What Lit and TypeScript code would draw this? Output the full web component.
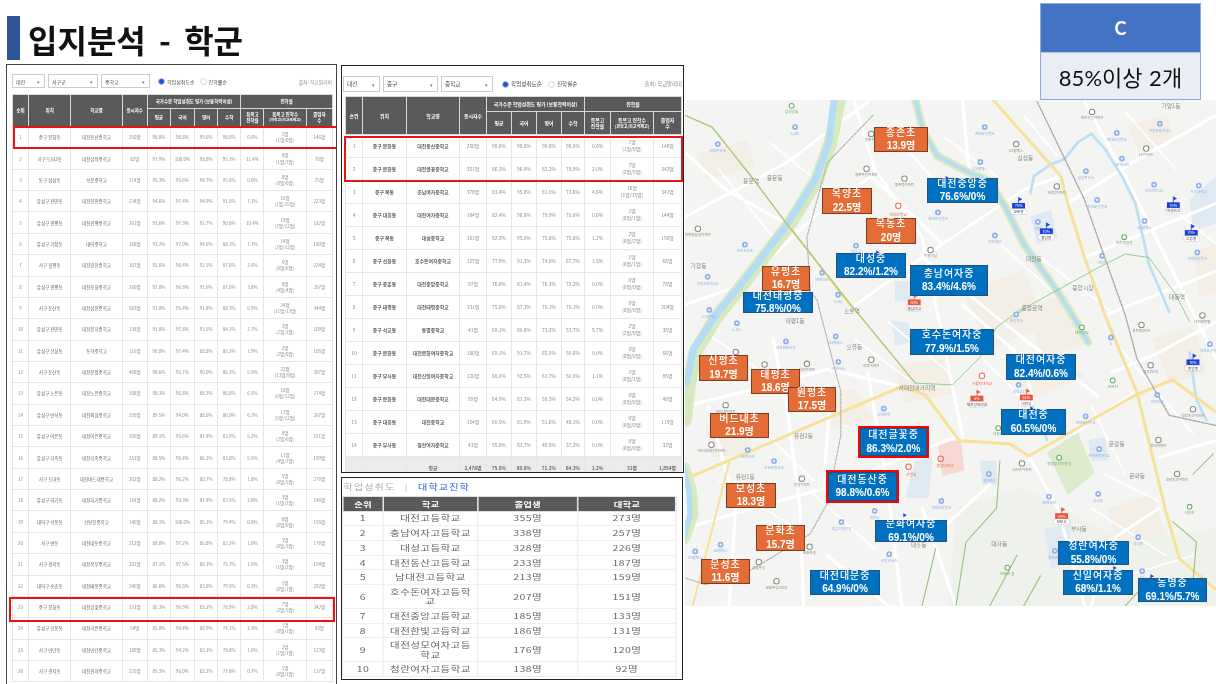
import { LitElement, html, css, svg } from "lit";
import { customElement } from "lit/decorators.js";

type Row = string[];
const leftRows: Row[] = `1|중구 문화동|대전동산중학교|250명|98.8%|98.8%|99.6%|98.0%|0.6%|1명|(1명/0명)|146명
2|서구 도마2동|대전삼육중학교|82명|97.9%|100.0%|98.8%|95.1%|11.4%|8명|(1명/7명)|70명
3|동구 삼성동|보문중학교|114명|95.3%|95.6%|94.7%|95.6%|0.0%|0명|(0명/0명)|75명
4|유성구 전민동|대전전민중학교|234명|94.6%|97.4%|94.9%|91.5%|7.1%|16명|(1명/15명)|223명
5|유성구 관평동|대전관평중학교|261명|93.6%|97.3%|92.7%|90.8%|10.4%|19명|(7명/12명)|182명
6|유성구 가정동|대덕중학교|168명|93.2%|97.0%|94.6%|88.1%|7.7%|14명|(2명/12명)|180명
7|서구 월평동|대전갈전중학교|307명|92.6%|98.4%|92.5%|87.0%|2.6%|6명|(0명/6명)|224명
8|유성구 관평동|대전동화중학교|260명|92.0%|96.8%|91.6%|87.6%|3.8%|8명|(4명/4명)|207명
9|서구 둔산동|대전삼천중학교|503명|91.8%|95.4%|91.8%|88.3%|6.9%|24명|(11명/13명)|344명
10|유성구 전민동|대전문지중학교|138명|91.8%|97.8%|93.5%|84.1%|2.7%|3명|(2명/1명)|109명
11|유성구 신성동|동혁중학교|116명|90.8%|97.4%|88.8%|86.2%|1.9%|2명|(2명/0명)|105명
12|서구 둔산동|대전문정중학교|468명|90.6%|95.7%|90.0%|86.1%|5.5%|22명|(13명/9명)|397명
13|유성구 노은동|대전노은중학교|308명|90.3%|96.8%|88.3%|86.0%|6.5%|18명|(6명/12명)|274명
14|유성구 반석동|대전외삼중학교|299명|89.5%|94.0%|88.6%|86.0%|6.3%|17명|(5명/12명)|267명
15|유성구 어은동|대전어은중학교|205명|89.1%|95.6%|87.8%|83.9%|5.2%|8명|(2명/6명)|151명
16|유성구 지족동|대전지족중학교|253명|88.5%|96.4%|86.2%|83.0%|5.5%|11명|(4명/7명)|199명
17|서구 도마동|대전버드내중학교|202명|88.2%|96.2%|80.7%|78.8%|1.8%|5명|(0명/5명)|276명
18|유성구 하기동|대전하기중학교|164명|88.2%|93.3%|87.8%|83.5%|2.0%|3명|(1명/2명)|146명
19|대덕구 석봉동|신탄진중학교|140명|88.1%|100.0%|85.1%|79.4%|0.0%|0명|(0명/0명)|155명
20|서구 변동|대전내동중학교|212명|88.0%|97.2%|86.8%|82.2%|1.6%|3명|(0명/3명)|176명
21|서구 관저동|대전봉우중학교|202명|87.1%|97.5%|88.1%|75.7%|1.5%|3명|(1명/2명)|194명
22|대덕구 송촌동|대전매봉중학교|346명|86.6%|96.5%|83.8%|79.5%|0.3%|1명|(0명/1명)|292명
23|중구 문화동|대전글꽃중학교|351명|86.3%|96.9%|83.2%|78.9%|2.0%|7명|(2명/5명)|342명
24|유성구 신봉동|대전가온중학교|54명|85.8%|94.4%|88.9%|74.1%|2.3%|1명|(0명/1명)|43명
25|서구 만년동|대전만년중학교|189명|85.3%|94.2%|83.1%|78.8%|1.6%|2명|(1명/1명)|123명
26|서구 관저동|대전관저중학교|225명|85.3%|96.0%|82.2%|77.8%|0.7%|1명|(0명/1명)|137명`
  .split("\n").map((l) => l.split("|"));

const midRows: Row[] = `1|중구 문화동|대전동산중학교|250명|98.8%|98.8%|99.6%|98.0%|0.6%|1명|(1명/0명)|146명
2|중구 문화동|대전글꽃중학교|351명|86.3%|96.9%|83.2%|78.9%|2.0%|7명|(2명/5명)|342명
3|중구 목동|충남여자중학교|378명|83.4%|95.8%|81.0%|73.6%|4.6%|16명|(1명/15명)|341명
4|중구 대흥동|대전여자중학교|164명|82.4%|96.8%|79.9%|70.6%|0.6%|1명|(0명/1명)|144명
5|중구 목동|대성중학교|161명|82.2%|95.0%|75.8%|75.8%|1.2%|2명|(0명/2명)|156명
6|중구 선화동|호수돈여자중학교|127명|77.9%|91.3%|74.8%|67.7%|1.5%|1명|(0명/1명)|66명
7|중구 중촌동|대전중앙중학교|97명|76.6%|81.4%|76.3%|72.2%|0.0%|0명|(0명/0명)|78명
8|중구 태평동|대전태평중학교|331명|75.8%|87.3%|70.1%|70.1%|0.0%|0명|(0명/0명)|204명
9|중구 석교동|동명중학교|41명|69.1%|80.8%|73.2%|53.7%|5.7%|2명|(2명/0명)|35명
10|중구 문화동|대전문화여자중학교|180명|69.1%|91.7%|65.0%|50.6%|0.0%|0명|(0명/0명)|66명
11|중구 부사동|대전신일여자중학교|120명|68.0%|92.5%|61.7%|50.0%|1.1%|1명|(0명/1명)|85명
12|중구 문화동|대전대문중학교|59명|64.9%|81.3%|59.3%|54.2%|0.0%|0명|(0명/0명)|40명
13|중구 대흥동|대전중학교|154명|60.5%|81.9%|51.6%|48.1%|0.0%|0명|(0명/0명)|119명
14|중구 부사동|청란여자중학교|43명|55.8%|83.7%|46.5%|37.2%|0.0%|0명|(0명/0명)|32명`
  .split("\n").map((l) => l.split("|"));

const uniRows: Row[] = [
  ["1", "대전고등학교", "355명", "273명"],
  ["2", "충남여자고등학교", "338명", "257명"],
  ["3", "대성고등학교", "328명", "226명"],
  ["4", "대전동산고등학교", "233명", "187명"],
  ["5", "남대전고등학교", "213명", "159명"],
  ["6", "호수돈여자고등학교", "207명", "151명"],
  ["7", "대전중앙고등학교", "185명", "133명"],
  ["8", "대전한빛고등학교", "186명", "131명"],
  ["9", "대전성모여자고등학교", "176명", "120명"],
  ["10", "청란여자고등학교", "138명", "92명"],
];

const leftCols = [16, 42, 51, 25, 23, 24, 23, 23, 23, 42, 26];
const midCols = [17, 44, 53, 27, 25, 25, 25, 23, 26, 43, 28];

type Label = [string, string, number, number, number, number, "b" | "o" | "r"];
const labels: Label[] = [
  ["종존초", "13.9명", 189, 27, 54, 25, "o"],
  ["대전중앙중", "76.6%/0%", 242, 78, 71, 25, "b"],
  ["목양초", "22.5명", 137, 88, 50, 26, "o"],
  ["목동초", "20명", 181, 118, 50, 26, "o"],
  ["대성중", "82.2%/1.2%", 151, 153, 70, 25, "b"],
  ["충남여자중", "83.4%/4.6%", 225, 165, 78, 31, "b"],
  ["유평초", "16.7명", 77, 166, 48, 25, "o"],
  ["대전태평중", "75.8%/0%", 58, 192, 70, 21, "b"],
  ["호수돈여자중", "77.9%/1.5%", 225, 229, 84, 26, "b"],
  ["대전여자중", "82.4%/0.6%", 321, 254, 70, 26, "b"],
  ["신평초", "19.7명", 14, 255, 49, 26, "o"],
  ["태평초", "18.6명", 66, 269, 49, 25, "o"],
  ["원평초", "17.5명", 103, 287, 48, 25, "o"],
  ["버드내초", "21.9명", 25, 313, 59, 25, "o"],
  ["대전중", "60.5%/0%", 316, 309, 65, 26, "b"],
  ["대전글꽃중", "86.3%/2.0%", 173, 326, 71, 32, "r"],
  ["대전동산중", "98.8%/0.6%", 141, 370, 73, 33, "r"],
  ["보성초", "18.3명", 41, 383, 50, 25, "o"],
  ["문화여자중", "69.1%/0%", 190, 420, 72, 22, "b"],
  ["문화초", "15.7명", 71, 425, 49, 26, "o"],
  ["문성초", "11.6명", 16, 459, 49, 25, "o"],
  ["대전대문중", "64.9%/0%", 125, 470, 70, 25, "b"],
  ["청란여자중", "55.8%/0%", 373, 441, 71, 24, "b"],
  ["신일여자중", "68%/1.1%", 378, 470, 70, 25, "b"],
  ["동명중", "69.1%/5.7%", 453, 478, 69, 24, "b"],
];

const B = 886; // offset between the two halves of the map sketch
const blue: [number, number, string][] = [
  [325, 375, "S-OIL"], [97, 425, "현대주유소"], [885, 375, "현대오일뱅크"], [872, 478, "GS칼텍스"],
  [1275, 392, "현대오일뱅크"], [1402, 365, "가양초등학교2"], [1290, 468, "SK에너지"], [1184, 505, "삼성주유소"],
  [1385, 545, "대전여자고2"], [1517, 548, "우송대학교"], [1217, 590, "현대오일뱅크"], [1042, 655, "한밭"],
  [1357, 652, "GS칼텍스"], [747, 627, "현대오일뱅크"], [915, 695, "대전여상"], [177, 722, "대전서부초"],
  [505, 725, "대성고"], [405, 805, "SK엔크린"], [67, 817, "가장초등학교2"], [452, 870, "S-OIL"],
  [72, 915, "GS칼텍스"], [153, 68 + B, "S-OIL"], [445, 107 + B, "GS칼텍스"], [298, 122 + B, "대전천변시장"],
  [453, 182 + B, "SK주유소"], [587, 320 + B, "서대전역"], [185, 442 + B, "SK엔크린"], [263, 475 + B, "보문초등학교"],
  [897, 513 + B, "대전여상"], [757, 593 + B, "현대오일뱅크"], [560, 622 + B, "대전고"], [462, 655 + B, "충남기계공고"],
  [105, 722 + B, "GS칼텍스"], [30, 742 + B, "GS칼텍스"], [603, 750 + B, "한밭도서관"], [1075, 580 + B, "SK엔크린"],
  [1220, 572 + B, "부사동"], [1338, 700 + B, "석교동"], [1092, 740 + B, "청란여고"], [1350, 800 + B, "GS"],
  [1183, 343 + B, "현대오일뱅크"], [1223, 440 + B, "문창초등학교2"], [1395, 280 + B, "대전대성"], [1258, 110 + B, "S"],
  [978, 42 + B, "제일약국"], [985, 250 + B, "대전고2"], [1550, 130 + B, "대전초등학교"], [1513, 745, "현대오일뱅크"],
  [1232, 755, "대전역"],
];
const grey: [number, number, string][] = [
  [550, 395, "종촌주공"], [536, 498, "중촌주공아파트"], [648, 527, "중촌동아파트"], [978, 425, "GS칼텍스"],
  [1098, 550, "한밭2아파트"], [1202, 330, "대전구성아파트"], [1362, 438, "LH아파트"], [725, 738, "목동더샵"],
  [38, 675, "대흥동삼성아파트"], [150, 153 + B, "신평아파트"], [235, 190 + B, "태평아파트"], [360, 188 + B, "삼부아파트"],
  [120, 310 + B, "버드내아파트"], [78, 427 + B, "버드내2단지아파트"], [345, 527 + B, "동양아파트"], [550, 176 + B, "오류아파트"],
  [368, 728 + B, "문화주공"], [218, 773 + B, "선암주공"], [270, 830 + B, "문화주공2단지"], [1348, 73 + B, "센트럴2단지"],
  [1528, 45 + B, "대전센트럴"], [1375, 192 + B, "삼부2단지"], [1500, 322 + B, "대전한신아파트"], [1398, 413 + B, "현대아파트"],
  [1453, 513 + B, "대전동부아파트"], [995, 482 + B, "대사동아파트"],
];
const places: [number, number, string][] = [
  [265, 530, "용문동"], [40, 792, "가장동"], [325, 68 + B, "태평1동"], [500, 145 + B, "오류동"], [350, 408 + B, "유천2동"],
  [178, 527 + B, "유천1동"], [1275, 430 + B, "문창동"], [1335, 525 + B, "문화동"], [1163, 682 + B, "부사동"], [928, 725 + B, "대사동"],
  [690, 730 + B, "대흥동"], [1435, 320, "가양1동"], [1005, 473, "삼성동"], [1175, 855, "중앙시장"], [1030, 770, "대전동"],
  [195, 540, "용문역"], [493, 925, "오룡역"], [685, 265 + B, "서대전네거리역"], [1453, 882, "대동역"], [1025, 915, "중앙로역"],
];
const greenPoi: [number, number, string][] = [
  [315, 312, "남선공원"], [1297, 700, "대전역광장"], [1172, 80 + B, "테미공원"], [1263, 237 + B, "보문산"], [925, 378 + B, "대종로"],
  [1105, 465 + B, "한밭종합운동장"], [1490, 610 + B, "식장산"], [952, 790 + B, "보문산 숲"],
];
const flags: [number, number, string, string, string][] = [
  [985, 600, "#1b3fd4", "70%", "보문중"], [1067, 675, "#1b3fd4", "70%", "충남중"], [1442, 598, "#1b3fd4", "70%", "대성여고"],
  [1495, 680, "#1b3fd4", "70%", "우송중"], [1500, 176 + B, "#1b3fd4", "70%", "중앙중"], [677, 885, "#e8553d", "80%", "충남여고"],
  [1008, 280 + B, "#e8553d", "51%", "대전고"], [862, 283 + B, "#e8553d", "6%", "대전성모여고"], [1112, 630 + B, "#e8553d", "34%", "보문고"],
];

const whiteRoads = [
  "M0 640 300 480 540 300", "M170 840 380 640 550 520 760 720", "M490 910 700 760 1000 560 1110 520",
  "M700 760 1000 1000 1220 1170", "M500 300 560 500 700 700 820 1290", "M1130 600 1320 480 1568 340",
  "M1180 760 1568 600", "M1240 930 1568 800", "M0 450 120 560 300 660", "M0 900 170 840", "M0 1200 200 1150 420 1090 640 1141",
  "M260 1000 300 1200 340 1500 350 1789", "M540 1100 600 1450 640 1789", "M0 1560 200 1500 420 1440 800 1290",
  "M1015 1346 1100 1500 1180 1789", "M1330 1156 1150 1280", "M1400 1350 1568 1300", "M1400 1500 1250 1600 1200 1789",
  "M820 300 840 520", "M1180 300 1300 520 1420 760 1568 1060", "M820 900 1000 1060 1040 1240", "M1568 950 1400 1040 1260 1100",
  "M70 1200 150 1500 130 1789", "M430 1150 410 1430", "M760 1560 900 1430", "M700 1500 800 1789", "M420 1640 600 1789",
];
const thinRoads = [
  "M100 500 260 700", "M250 420 420 560", "M620 400 760 560", "M760 400 920 520", "M1300 330 1450 500", "M1000 340 1100 460",
  "M1420 600 1568 720", "M930 720 1130 900", "M1050 760 1260 920", "M1260 1000 1500 1280", "M1200 1200 1300 1400", "M860 1040 1000 1180",
  "M600 950 780 1100", "M500 1000 660 1120", "M60 980 260 1120", "M180 1220 380 1420", "M100 1420 330 1560", "M380 1460 560 1620",
  "M1240 1400 1400 1480", "M1200 1500 1420 1640", "M1300 1700 1500 1640",
];
const beige: string[] = [
  "M30 455 180 415 210 490 70 530Z", "M820 860 1000 800 1070 960 900 1030Z", "M1000 900 1130 870 1180 1020 1060 1060Z",
  "M960 1090 1110 1050 1180 1110 1020 1180Z", "M420 1160 500 1150 560 1240 440 1260Z", "M1380 1000 1500 960 1540 1100 1430 1130Z",
  "M1310 370 1420 340 1450 420 1340 450Z", "M620 1080 760 1060 790 1160 650 1190Z", "M1500 740 1568 720 1568 860 1520 880Z",
  "M60 1250 190 1240 200 1340 80 1350Z", "M1250 1500 1380 1460 1420 1580 1280 1620Z",
];
const water: string[] = [
  "M610 945 660 955 670 1010 620 1020Z", "M1020 640 1080 620 1100 700 1040 720Z", "M1060 1560 1140 1550 1130 1660 1080 1680Z",
  "M680 1360 730 1350 720 1470 650 1470Z", "M1490 590 1568 520 1568 660 1500 680Z", "M870 1360 920 1360 920 1430 880 1430Z",
  "M620 830 680 830 680 890 620 890Z", "M1190 1300 1240 1290 1250 1360 1200 1360Z",
];

function poi(x: number, y: number, t: string, color: string, ring: number, fs = 11) {
  return svg`<circle cx=${x} cy=${y} r=${ring} fill="#fff" stroke=${color} stroke-width="3"/>
    <text x=${x} y=${y + ring + 14} font-size=${fs} fill=${color} text-anchor="middle">${t}</text>`;
}
function pin(x: number, y: number, t: string) {
  return svg`<circle cx=${x} cy=${y} r="8.5" fill="#8fb3e8"/><circle cx=${x} cy=${y} r="3.2" fill="#fff"/>
    <text x=${x} y=${y + 23} font-size="10.5" fill="#8faee0" text-anchor="middle">${t}</text>`;
}

const mapSvg = svg`
  <path d="M800 1500 1000 1440 1300 1600 1568 1560 1568 1789 780 1789Z" fill="#eff1ec"/>
  ${beige.map((d) => svg`<path d=${d} fill="#f3eee6"/>`)}
  ${water.map((d) => svg`<path d=${d} fill="#dfe9f2"/>`)}
  <path d="M745 1305 815 1300 825 1390 760 1405Z" fill="#f8d8d2"/>
  <path d="M1070 1336 1160 1276 1210 1396 1130 1461Z" fill="#dcebcb"/>
  <g fill="none" stroke-linecap="round" stroke-linejoin="round">
    ${thinRoads.map((d) => svg`<path d=${d} stroke="#fff" stroke-width="5"/>`)}
    ${whiteRoads.map((d) => svg`<path d=${d} stroke="#fff" stroke-width="9"/>`)}
    <path d="M455 295 430 420 390 530 310 660 170 840 90 940 30 1040 10 1150 0 1240" stroke="#d7e9bf" stroke-width="40"/>
    <path d="M440 295 425 420 385 530 300 665 165 840 95 925 25 1030 5 1130" stroke="#b4dcf5" stroke-width="20"/>
    <path d="M0 1380 20 1450 25 1520 0 1590" stroke="#d7e9bf" stroke-width="30"/>
    <path d="M-5 1380 12 1450 15 1520 -5 1590" stroke="#b4dcf5" stroke-width="16"/>
    <path d="M680 295 705 390 745 460 830 505 900 535 945 610 1000 720 1100 860 1150 940 1190 1010" stroke="#d7e9bf" stroke-width="24"/>
    <path d="M680 295 705 390 745 460 830 505 900 535 945 610 1000 720 1100 860 1150 940 1190 1010" stroke="#b4dcf5" stroke-width="11"/>
    <path d="M1020 570 1030 520 1080 485 1120 470 1160 420 1200 395 1240 440 1290 520 1330 600 1370 780 1430 920" stroke="#bcdff3" stroke-width="8"/>
    <path d="M1490 1040 1510 1180 1540 1240" stroke="#bcdff3" stroke-width="8"/>
    <path d="M1020 1180 1040 1230 1070 1300" stroke="#bcdff3" stroke-width="6"/>
    <path d="M910 295 1110 520 1130 600 1180 760 1240 930 1335 1160 1420 1510 1460 1650 1568 1740" stroke="#f6e19a" stroke-width="9"/>
    <path d="M20 1406 640 1141 710 1166 810 1301 960 1311 1015 1346 1330 1166 1440 1121 1568 1216" stroke="#f6e19a" stroke-width="9"/>
    <path d="M130 1366 20 1800" stroke="#f6e19a" stroke-width="6"/>
    <path d="M310 670 490 905" stroke="#f6e19a" stroke-width="6"/>
    <path d="M0 340 80 375 195 520 300 660 490 900 680 1131" stroke="#a9c76a" stroke-width="4"/>
    <path d="M970 935 1020 900 1220 790 1300 750 1370 760 1450 870 1490 950" stroke="#82c784" stroke-width="2.5"/>
    <path d="M680 1131 790 1136 870 1056 920 966 1010 900" stroke="#82c784" stroke-width="2.5"/>
    <path d="M1040 300 1180 590 1250 790 1300 930 1335 1060 1430 1226 1568 1256" stroke="#a9a9a9" stroke-width="4" stroke-dasharray="8 4"/>
    <path d="M555 340 420 480 360 700 370 860 390 886 460 1156 460 1286 420 1486 370 1576 200 1680 60 1726 0 1706" stroke="#b5b5b5" stroke-width="3.5" stroke-dasharray="8 4"/>
    <path d="M800 1789 830 1600 920 1500 930 1360 M900 1789 980 1640 M740 1620 700 1789 M1380 1700 1300 1789 M1500 1400 1560 1340 M1440 1540 1510 1600 1500 1720 M1050 1700 1000 1789" stroke="#8fc06c" stroke-width="3"/>
  </g>
  <g font-family="'Noto Sans CJK KR',sans-serif">
    ${blue.map(([x, y, t]) => pin(x, y, t))}
    ${grey.map(([x, y, t]) => poi(x, y, t, "#8b8b84", 8, 10.5))}
    ${greenPoi.map(([x, y, t]) => poi(x, y, t, "#6bab6d", 7))}
    ${places.map(([x, y, t]) => svg`<text x=${x} y=${y} font-size="17" fill="#8c8c88" text-anchor="middle">${t}</text>`)}
    ${flags.map(([x, y, c, p, t]) => svg`
      <path d="M${x} ${y - 18}V${y + 8}" stroke=${c} stroke-width="2"/>
      <path d="M${x} ${y - 18}l11 6-11 6Z" fill=${c}/>
      <rect x=${x - 19} y=${y - 1} width="38" height="17" fill=${c}/>
      <text x=${x} y=${y + 12} font-size="11" fill="#fff" text-anchor="middle">${p}</text>
      <rect x=${x - 24} y=${y + 16} width="48" height="17" rx="7" fill="#fff" stroke="#aaa"/>
      <text x=${x} y=${y + 29} font-size="11" fill="#444" text-anchor="middle">${t}</text>`)}
    <circle cx="630" cy="607" r="8" fill="#fff" stroke="#ea6a5a" stroke-width="3"/>
    <text x="630" y="636" font-size="11" fill="#ea6a5a" text-anchor="middle">대전선병원</text>
    <circle cx="877" cy="1109" r="8" fill="#fff" stroke="#ea6a5a" stroke-width="3"/>
    <text x="877" y="1136" font-size="11" fill="#ea6a5a" text-anchor="middle">가톨릭대학교</text>
    <circle cx="755" cy="1354" r="8" fill="none" stroke="#ea6a5a" stroke-width="3"/>
    <text x="768" y="1380" font-size="11" fill="#ea6a5a" text-anchor="middle">충남대학교</text>
    <circle cx="660" cy="1378" r="8" fill="#fff" stroke="#ea6a5a" stroke-width="3"/>
    <text x="668" y="1406" font-size="11" fill="#ea6a5a" text-anchor="middle">선병원</text>
    <path d="M565 740v10M565 740l9 5-9 5Z M770 520v8l7-4Z M645 1516v10l9-5Z M1265 1672v10l9-5Z M1375 1696v10l9-5Z M1020 1200v10l8-5Z" fill="#1b3fd4" stroke="#1b3fd4"/>
  </g>`;

@customElement("app-root")
export class AppRoot extends LitElement {
  static styles = css`
    :host {
      display: grid;
      grid-template-columns: 335px 344px 537px;
      grid-template-rows: 64px 620px;
      width: 1216px;
      height: 684px;
      overflow: hidden;
      background: #fff;
      font-family: "Noto Sans CJK KR", "Liberation Sans", sans-serif;
    }
    .head {
      grid-column: 1 / 3;
      grid-row: 1;
      display: flex;
      align-items: flex-start;
      gap: 8px;
      padding: 16px 0 0 7px;
      filter: blur(0.35px);
    }
    .head i { display: block; width: 13px; height: 44px; background: #2f5597; }
    .head h1 {
      margin: 0;
      font-size: 32px;
      line-height: 46px;
      font-weight: 700;
      color: #111;
      word-spacing: 6px;
      white-space: nowrap;
    }
    .panel {
      box-sizing: border-box;
      border: 1px solid #333;
      position: relative;
      overflow: hidden;
      background: #fff;
    }
    .left { grid-column: 1; grid-row: 2; margin-left: 6px; height: 640px; padding: 9px 4px 0 5px; border-color: #444; width: 331px; }
    .midcol { grid-column: 2; grid-row: 2; margin-left: 6px; display: flex; flex-direction: column; gap: 4px; padding-top: 1px; width: 343px; }
    .mid { height: 408px; padding: 10px 1px 0 3px; border: 1.5px solid #222; }
    .uni { height: 203px; padding: 3px 0 0 0; border: 1.5px solid #222; width: 342px; }
    .right { grid-column: 3; grid-row: 1 / 3; display: flex; flex-direction: column; margin-left: 6px; width: 531px; }
    .legend {
      align-self: flex-end;
      box-sizing: border-box;
      width: 161px;
      height: 97px;
      margin: 3px 15px 0 0;
      display: grid;
      grid-template-rows: 48px 1fr;
      border: 1px solid #8faadc;
      filter: blur(0.3px);
    }
    .legend b {
      background: #4472c4;
      color: #fff;
      display: flex;
      align-items: center;
      justify-content: center;
      font: 700 18px "Lato", "Liberation Sans", sans-serif;
    }
    .legend span {
      background: #e9edf4;
      border-top: 1px solid #b4c7e7;
      color: #111;
      display: flex;
      align-items: center;
      justify-content: center;
      font: 400 22px "Lato", "Noto Sans CJK KR", sans-serif;
      word-spacing: 1px;
    }
    .map {
      position: relative;
      width: 531px;
      height: 506px;
      background: #f4f4f3;
      overflow: hidden;
    }
    .map svg { display: block; position: absolute; inset: 0; width: 100%; height: 100%; filter: blur(0.5px); }
    .tag {
      position: absolute;
      box-sizing: border-box;
      display: flex;
      flex-direction: column;
      align-items: center;
      justify-content: center;
      color: #fff;
      font: 700 10px/13.5px "Liberation Sans", "Noto Sans CJK KR", sans-serif;
      padding-bottom: 1px;
      white-space: nowrap;
      border: 1px solid #24507a;
      background: #0070c0;
      filter: blur(0.3px);
    }
    .tag span:first-child { letter-spacing: 0.9px; font-weight: 500; }
    .tag.o { background: #e46c37; border-color: #7d3d1e; }
    .tag.r { border: 2.5px solid #f00; box-shadow: inset 0 0 0 1px #24507a; }
    .filters { display: flex; align-items: center; font-size: 5px; color: #444; height: 14px; }
    .sel {
      box-sizing: border-box;
      height: 100%;
      border: 1px solid #ccc;
      display: flex;
      align-items: center;
      justify-content: space-between;
      padding: 0 4px 0 3px;
      background: #fff;
      margin-right: 3px;
    }
    .sel::after { content: "▾"; font-size: 5px; color: #777; }
    .radio { width: 5px; height: 5px; border-radius: 50%; margin: 0 2px 0 5px; border: 1px solid #d5d5d5; background: #fff; flex: none; }
    .radio.on { background: #1a4fd8; border-color: #bcd; }
    .src { margin-left: auto; color: #888; font-size: 4.8px; }
    .blur { filter: blur(0.35px); }
    table { border-collapse: collapse; table-layout: fixed; text-align: center; }
    th {
      background: #5a5a5a;
      color: #fff;
      font-weight: 700;
      border: 1px solid #d8d8d8;
      padding: 0;
      overflow: hidden;
      line-height: 1.15;
    }
    td { border: 1px solid #e6e6e6; padding: 0; color: #8a8a8a; overflow: hidden; line-height: 1.35; white-space: nowrap; }
    td.k { color: #666; }
    .left table { width: 321px; margin-top: 6px; font-size: 4.5px; }
    .left .hr1 { height: 14px; }
    .left .hr2 { height: 18px; }
    .left tbody tr { height: 21.36px; }
    .mid .filters { height: 16px; font-size: 5.6px; margin-left: -2px; }
    .mid .src { font-size: 5.4px; }
    .mid .radio { margin-left: 6px; }
    .mid table { width: 336px; margin-top: 4px; font-size: 4.9px; }
    .mid td.k { color: #444; font-weight: 500; }
    .mid .hr1 { height: 15px; }
    .mid .hr2 { height: 23px; }
    .mid tbody tr { height: 23px; }
    .mid .tot td { background: #ebebeb; height: 15px; color: #555; font-weight: 500; }
    .mark { position: absolute; box-sizing: border-box; border: 2.5px solid #ee1111; filter: blur(0.25px); }
    .mark.a { left: 6px; top: 61px; width: 325px; height: 23px; }
    .mark.b { left: 2px; top: 532px; width: 326px; height: 25px; }
    .mark.c { left: 1.5px; top: 70px; width: 339px; height: 46px; }
    .stretch { width: 247px; transform: scaleX(1.35); transform-origin: 0 0; }
    .tabs { font-size: 7.5px; color: #aaa; height: 15px; line-height: 11px; letter-spacing: 0.8px; padding-left: 1px; }
    .tabs em { font-style: normal; color: #2a5bd7; margin-left: 7px; }
    .tabs u { text-decoration: none; color: #bbb; margin-left: 7px; }
    .uni table { width: 247px; font-size: 7.8px; letter-spacing: 0.3px; }
    .uni th { height: 13.5px; border-color: #e0e0e0; letter-spacing: 0; font-size: 7px; }
    .uni td { color: #666; white-space: normal; line-height: 9.8px; height: 13.7px; box-sizing: content-box; border-color: #efefef; }
    .uni td.w { height: 23px; padding: 0 3px; }
  `;

  private filters(w: number[], src: string) {
    return html`<div class="filters">
      ${["대전", src === "l" ? "서구군" : "중구", "중학교"].map(
        (t, i) => html`<div class="sel" style="width:${w[i]}px">${t}</div>`
      )}
      <span class="radio on"></span>학업성취도순
      <span class="radio"></span>진학률순
      <span class="src">출처: 학교알리미</span>
    </div>`;
  }

  private head(cols: number[]) {
    return html`<colgroup>${cols.map((c) => html`<col style="width:${c}px" />`)}</colgroup>
      <thead>
        <tr class="hr1">
          <th rowspan="2">순위</th><th rowspan="2">위치</th><th rowspan="2">학교명</th><th rowspan="2">응시자수</th>
          <th colspan="4">국가수준 학업성취도 평가 (보통학력이상)</th><th colspan="3">진학률</th>
        </tr>
        <tr class="hr2">
          <th>평균</th><th>국어</th><th>영어</th><th>수학</th>
          <th>특목고<br />진학률</th><th>특목고 진학수<br /><small>(과학고/외고국제고)</small></th><th>졸업자<br />수</th>
        </tr>
      </thead>`;
  }

  private row(r: Row) {
    return html`<tr>
      ${r.map((c, i) =>
        i === 9 ? html`<td>${c}<br />${r[10]}</td>` : i === 10 ? null : html`<td class=${i === 1 || i === 2 ? "k" : ""}>${c}</td>`
      )}
    </tr>`;
  }

  render() {
    return html`
      <div class="head"><i></i><h1>입지분석 - 학군</h1></div>
      <section class="panel left">
        <div class="blur">
          ${this.filters([33, 50, 49], "l")}
          <table>${this.head(leftCols)}<tbody>${leftRows.map((r) => this.row(r))}</tbody></table>
        </div>
        <div class="mark a"></div>
        <div class="mark b"></div>
      </section>
      <div class="midcol">
        <section class="panel mid">
          <div class="blur">
            ${this.filters([37, 55, 52], "m")}
            <table>
              ${this.head(midCols)}
              <tbody>
                ${midRows.map((r) => this.row(r))}
                <tr class="tot">
                  <td></td><td></td><td>평균</td><td>2,476명</td><td>75.0%</td><td>89.6%</td><td>71.2%</td><td>64.3%</td><td>1.2%</td><td>31명</td><td>1,854명</td>
                </tr>
              </tbody>
            </table>
          </div>
          <div class="mark c"></div>
        </section>
        <section class="panel uni">
          <div class="blur stretch">
            <div class="tabs">학업성취도<u>|</u><em>대학교진학</em></div>
            <table>
              <colgroup>
                <col style="width:30px" /><col style="width:70px" /><col style="width:74px" /><col style="width:73px" />
              </colgroup>
              <thead><tr><th>순위</th><th>학교</th><th>졸업생</th><th>대학교</th></tr></thead>
              <tbody>
                ${uniRows.map(
                  (r) => html`<tr>${r.map((c, i) => html`<td class=${c.length > 8 && i === 1 ? "w" : ""}>${c}</td>`)}</tr>`
                )}
              </tbody>
            </table>
          </div>
        </section>
      </div>
      <div class="right">
        <div class="legend"><b>C</b><span>85%이상 2개</span></div>
        <div class="map">
          <svg viewBox="0 295 1568 1494" xmlns="http://www.w3.org/2000/svg">${mapSvg}</svg>
          ${labels.map(
            ([a, b, x, y, w, h, k]) =>
              html`<div class="tag ${k}" style="left:${x}px;top:${y}px;width:${w}px;height:${h}px"><span>${a}</span><span>${b}</span></div>`
          )}
        </div>
      </div>
    `;
  }
}
